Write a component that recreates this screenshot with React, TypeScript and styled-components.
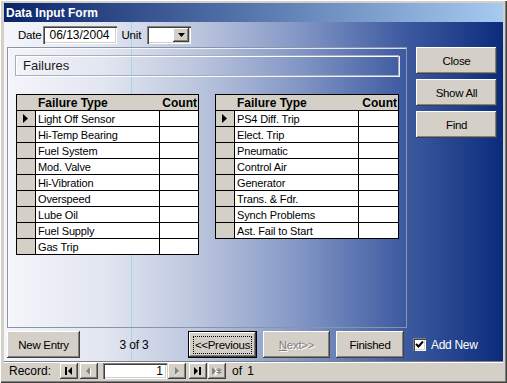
import React from 'react';
import styled, { createGlobalStyle, css } from 'styled-components';

const leftFailures = [
  'Light Off Sensor',
  'Hi-Temp Bearing',
  'Fuel System',
  'Mod. Valve',
  'Hi-Vibration',
  'Overspeed',
  'Lube Oil',
  'Fuel Supply',
  'Gas Trip',
];

const rightFailures = [
  'PS4 Diff. Trip',
  'Elect. Trip',
  'Pneumatic',
  'Control Air',
  'Generator',
  'Trans. & Fdr.',
  'Synch Problems',
  'Ast. Fail to Start',
];

const GlobalStyle = createGlobalStyle`
  html, body {
    margin: 0;
    padding: 0;
    background: #d4d0c8;
  }
  body {
    font-family: "Liberation Sans", Arial, sans-serif;
    font-size: 11px;
    color: #000;
  }
  * {
    box-sizing: border-box;
  }
`;

const raised = css`
  background: #d4d0c8;
  box-shadow: inset -1px -1px 0 #404040, inset 1px 1px 0 #ffffff,
    inset -2px -2px 0 #808080, inset 2px 2px 0 #d4d0c8;
`;

const sunken = css`
  background: #ffffff;
  box-shadow: inset 1px 1px 0 #808080, inset 2px 2px 0 #404040,
    inset -1px -1px 0 #ffffff, inset -2px -2px 0 #d4d0c8;
`;

const Window = styled.div`
  width: 507px;
  height: 383px;
  display: flex;
  flex-direction: column;
  padding: 3px 4px 3px 4px;
  background: #d4d0c8;
  box-shadow: inset 1px 1px 0 #ffffff, inset -1px -1px 0 #404040,
    inset -2px -2px 0 #808080;
`;

const TitleBar = styled.div`
  height: 19px;
  display: flex;
  align-items: center;
  padding-left: 2px;
  background: linear-gradient(to right, #0a246a, #a6caf0);
  color: #ffffff;
  font-weight: bold;
  font-size: 12px;
`;

const FormArea = styled.div`
  height: 339px;
  display: flex;
  flex-direction: column;
  background: linear-gradient(
      to right,
      transparent 127px,
      rgba(150, 210, 225, 0.75) 127px,
      rgba(150, 210, 225, 0.75) 128px,
      transparent 128px
    ),
    linear-gradient(
      to right,
      #f5f6fb 0%,
      #e2e6f0 20%,
      #b8c3dc 40%,
      #8094c4 60%,
      #3e5ba1 80%,
      #26448e 90%,
      #0a2a7c 100%
    );
`;

const TopRow = styled.div`
  height: 25px;
  display: flex;
  align-items: center;
  padding-left: 14px;
`;

const Label = styled.span<{ $gap?: number }>`
  margin-left: ${(p) => p.$gap ?? 0}px;
  font-size: 11.5px;
  letter-spacing: -0.2px;
`;

const DateField = styled.div`
  ${sunken};
  width: 74px;
  height: 18px;
  margin-left: 1px;
  display: flex;
  align-items: center;
  justify-content: center;
  font-size: 12px;
`;

const Combo = styled.div`
  ${sunken};
  width: 44px;
  height: 18px;
  margin-left: 6px;
  display: flex;
  justify-content: flex-end;
  padding: 2px;
`;

const ComboButton = styled.div`
  ${raised};
  width: 16px;
  height: 14px;
  display: flex;
  align-items: center;
  justify-content: center;
`;

const MainRow = styled.div`
  height: 281px;
  display: flex;
  padding-left: 3px;
  gap: 9px;
`;

const Panel = styled.div`
  width: 400px;
  height: 281px;
  border: 1px solid #8b93a8;
  box-shadow: inset 1px 1px 0 rgba(255, 255, 255, 0.8);
  padding: 7px 7px 0 7px;
`;

const SectionBox = styled.div`
  height: 21px;
  border: 1px solid #a6aec0;
  box-shadow: inset 1px 1px 0 #ffffff, 1px 1px 0 rgba(255, 255, 255, 0.9);
  display: flex;
  align-items: center;
  padding-left: 7px;
  font-size: 13px;
  color: #1a1a1a;
`;

const TablesRow = styled.div`
  display: flex;
  gap: 16px;
  margin-top: 18px;
  padding-left: 1px;
`;

const Table = styled.div`
  border: 1px solid #000000;
  background: #ffffff;
  align-self: flex-start;
`;

const HeaderRow = styled.div<{ $countWidth: number }>`
  height: 15px;
  display: grid;
  grid-template-columns: 19px 123px ${(p) => p.$countWidth}px;
  background: #d4d0c8;
  font-weight: bold;
  font-size: 12px;
  align-items: center;
`;

const HeaderType = styled.span`
  grid-column: 2;
  padding-left: 2px;
`;

const HeaderCount = styled.span`
  text-align: right;
  padding-right: 1px;
`;

const DataRow = styled.div<{ $countWidth: number }>`
  height: 16px;
  display: grid;
  grid-template-columns: 18px 124px ${(p) => p.$countWidth}px;
  border-top: 1px solid #000000;
`;

const Selector = styled.div`
  background: #d4d0c8;
  display: flex;
  align-items: center;
  justify-content: center;
  padding-right: 2px;
`;

const TypeCell = styled.div`
  border-left: 1px solid #000000;
  padding-left: 2px;
  display: flex;
  align-items: center;
  font-size: 11px;
  letter-spacing: -0.15px;
  white-space: nowrap;
`;

const CountCell = styled.div`
  border-left: 1px solid #000000;
`;

const ButtonColumn = styled.div`
  display: flex;
  flex-direction: column;
  gap: 5px;
`;

const FormButton = styled.div<{
  $width: number;
  $focused?: boolean;
  $disabled?: boolean;
}>`
  ${raised};
  width: ${(p) => p.$width}px;
  height: 27px;
  display: flex;
  align-items: center;
  justify-content: center;
  font-size: 11.5px;
  letter-spacing: -0.3px;
  color: #000;
  ${(p) =>
    p.$focused &&
    css`
      box-shadow: inset 0 0 0 1px #000000, inset -2px -2px 0 #404040,
        inset 2px 2px 0 #ffffff, inset -3px -3px 0 #808080;
    `}
  ${(p) =>
    p.$disabled &&
    css`
      color: #808080;
      text-shadow: 1px 1px 0 #ffffff;
    `}
`;

const FocusRing = styled.span`
  border: 1px dotted #000000;
  padding: 1px 1px;
  line-height: 14px;
`;

const Underlined = styled.span`
  text-decoration: underline;
`;

const BottomRow = styled.div`
  height: 27px;
  margin-top: 3px;
  display: flex;
  align-items: center;
  padding-left: 3px;
`;

const Counter = styled.div`
  width: 108px;
  text-align: center;
  font-size: 12px;
  letter-spacing: -0.2px;
`;

const Spacer = styled.div<{ $w: number }>`
  width: ${(p) => p.$w}px;
  flex: none;
`;

const CheckBox = styled.div`
  ${sunken};
  width: 13px;
  height: 13px;
  display: flex;
  align-items: center;
  justify-content: center;
`;

const CheckLabel = styled.span`
  margin-left: 5px;
  color: #ffffff;
  font-size: 12px;
  letter-spacing: -0.3px;
`;

const NavBar = styled.div`
  height: 19px;
  display: flex;
  align-items: center;
  padding-left: 5px;
  border-top: 1px solid #808080;
  box-shadow: inset 0 1px 0 #ffffff;
  font-size: 12px;
`;

const NavButton = styled.div<{ $gap?: number }>`
  ${raised};
  width: 18px;
  height: 16px;
  margin-left: ${(p) => p.$gap ?? 2}px;
  display: flex;
  align-items: center;
  justify-content: center;
`;

const NavField = styled.div`
  ${sunken};
  width: 64px;
  height: 16px;
  margin-left: 5px;
  display: flex;
  align-items: center;
  justify-content: flex-end;
  padding-right: 4px;
  font-size: 12px;
`;

const NavText = styled.span<{ $gap: number }>`
  margin-left: ${(p) => p.$gap}px;
  word-spacing: 2px;
`;

const RowArrow = () => (
  <svg width="5" height="9" viewBox="0 0 5 9">
    <path d="M0 0 L5 4.5 L0 9 Z" fill="#000" />
  </svg>
);

const DownArrow = () => (
  <svg width="7" height="4" viewBox="0 0 7 4">
    <path d="M0 0 H7 L3.5 4 Z" fill="#000" />
  </svg>
);

const Check = () => (
  <svg width="9" height="9" viewBox="0 0 9 9">
    <path d="M1 4 L3.5 6.5 L8 1.5" stroke="#000" strokeWidth="2" fill="none" />
  </svg>
);

type GlyphProps = { kind: 'first' | 'prev' | 'next' | 'last' | 'new' };

const NavGlyph = ({ kind }: GlyphProps) => {
  const off = kind === 'prev' || kind === 'next' || kind === 'new';
  const fill = off ? '#808080' : '#000';
  return (
    <svg width="10" height="9" viewBox="0 0 10 9">
      {off && (
        <g fill="#fff" transform="translate(1 1)">
          {kind === 'prev' && <path d="M6 0 V8 L2 4 Z" />}
          {kind !== 'prev' && <path d="M2 0 V8 L6 4 Z" />}
        </g>
      )}
      {kind === 'first' && (
        <>
          <rect x="1" y="0" width="2" height="8" fill={fill} />
          <path d="M8 0 V8 L4 4 Z" fill={fill} />
        </>
      )}
      {kind === 'prev' && <path d="M6 0 V8 L2 4 Z" fill={fill} />}
      {kind === 'next' && <path d="M3 0 V8 L7 4 Z" fill={fill} />}
      {kind === 'last' && (
        <>
          <path d="M1 0 V8 L5 4 Z" fill={fill} />
          <rect x="6" y="0" width="2" height="8" fill={fill} />
        </>
      )}
      {kind === 'new' && (
        <>
          <path d="M0 0 V8 L4 4 Z" fill={fill} />
          <path d="M7 1 V7 M4.5 2.5 L9.5 5.5 M9.5 2.5 L4.5 5.5" stroke={fill} strokeWidth="1.2" />
        </>
      )}
    </svg>
  );
};

const FailureTable = ({ items, countWidth }: { items: string[]; countWidth: number }) => (
  <Table>
    <HeaderRow $countWidth={countWidth}>
      <HeaderType>Failure Type</HeaderType>
      <HeaderCount>Count</HeaderCount>
    </HeaderRow>
    {items.map((name, i) => (
      <DataRow key={name} $countWidth={countWidth}>
        <Selector>{i === 0 && <RowArrow />}</Selector>
        <TypeCell>{name}</TypeCell>
        <CountCell />
      </DataRow>
    ))}
  </Table>
);

const App = () => {
  return (
    <>
      <GlobalStyle />
      <Window>
        <TitleBar>Data Input Form</TitleBar>
        <FormArea>
          <TopRow>
            <Label>Date</Label>
            <DateField>06/13/2004</DateField>
            <Label $gap={5}>Unit</Label>
            <Combo>
              <ComboButton>
                <DownArrow />
              </ComboButton>
            </Combo>
          </TopRow>
          <MainRow>
            <Panel>
              <SectionBox>Failures</SectionBox>
              <TablesRow>
                <FailureTable items={leftFailures} countWidth={39} />
                <FailureTable items={rightFailures} countWidth={40} />
              </TablesRow>
            </Panel>
            <ButtonColumn>
              <FormButton $width={81}>Close</FormButton>
              <FormButton $width={81}>Show All</FormButton>
              <FormButton $width={81}>Find</FormButton>
            </ButtonColumn>
          </MainRow>
          <BottomRow>
            <FormButton $width={73}>New Entry</FormButton>
            <Counter>3 of 3</Counter>
            <FormButton $width={69} $focused>
              <FocusRing>&lt;&lt;Previous</FocusRing>
            </FormButton>
            <Spacer $w={6} />
            <FormButton $width={67} $disabled>
              <span>
                <Underlined>N</Underlined>ext&gt;&gt;
              </span>
            </FormButton>
            <Spacer $w={6} />
            <FormButton $width={68}>Finished</FormButton>
            <Spacer $w={9} />
            <CheckBox>
              <Check />
            </CheckBox>
            <CheckLabel>Add New</CheckLabel>
          </BottomRow>
        </FormArea>
        <NavBar>
          <span>Record:</span>
          <NavButton $gap={9}>
            <NavGlyph kind="first" />
          </NavButton>
          <NavButton>
            <NavGlyph kind="prev" />
          </NavButton>
          <NavField>1</NavField>
          <NavButton $gap={1}>
            <NavGlyph kind="next" />
          </NavButton>
          <NavButton $gap={3}>
            <NavGlyph kind="last" />
          </NavButton>
          <NavButton $gap={1}>
            <NavGlyph kind="new" />
          </NavButton>
          <NavText $gap={6}>of 1</NavText>
        </NavBar>
      </Window>
    </>
  );
};

export default App;
